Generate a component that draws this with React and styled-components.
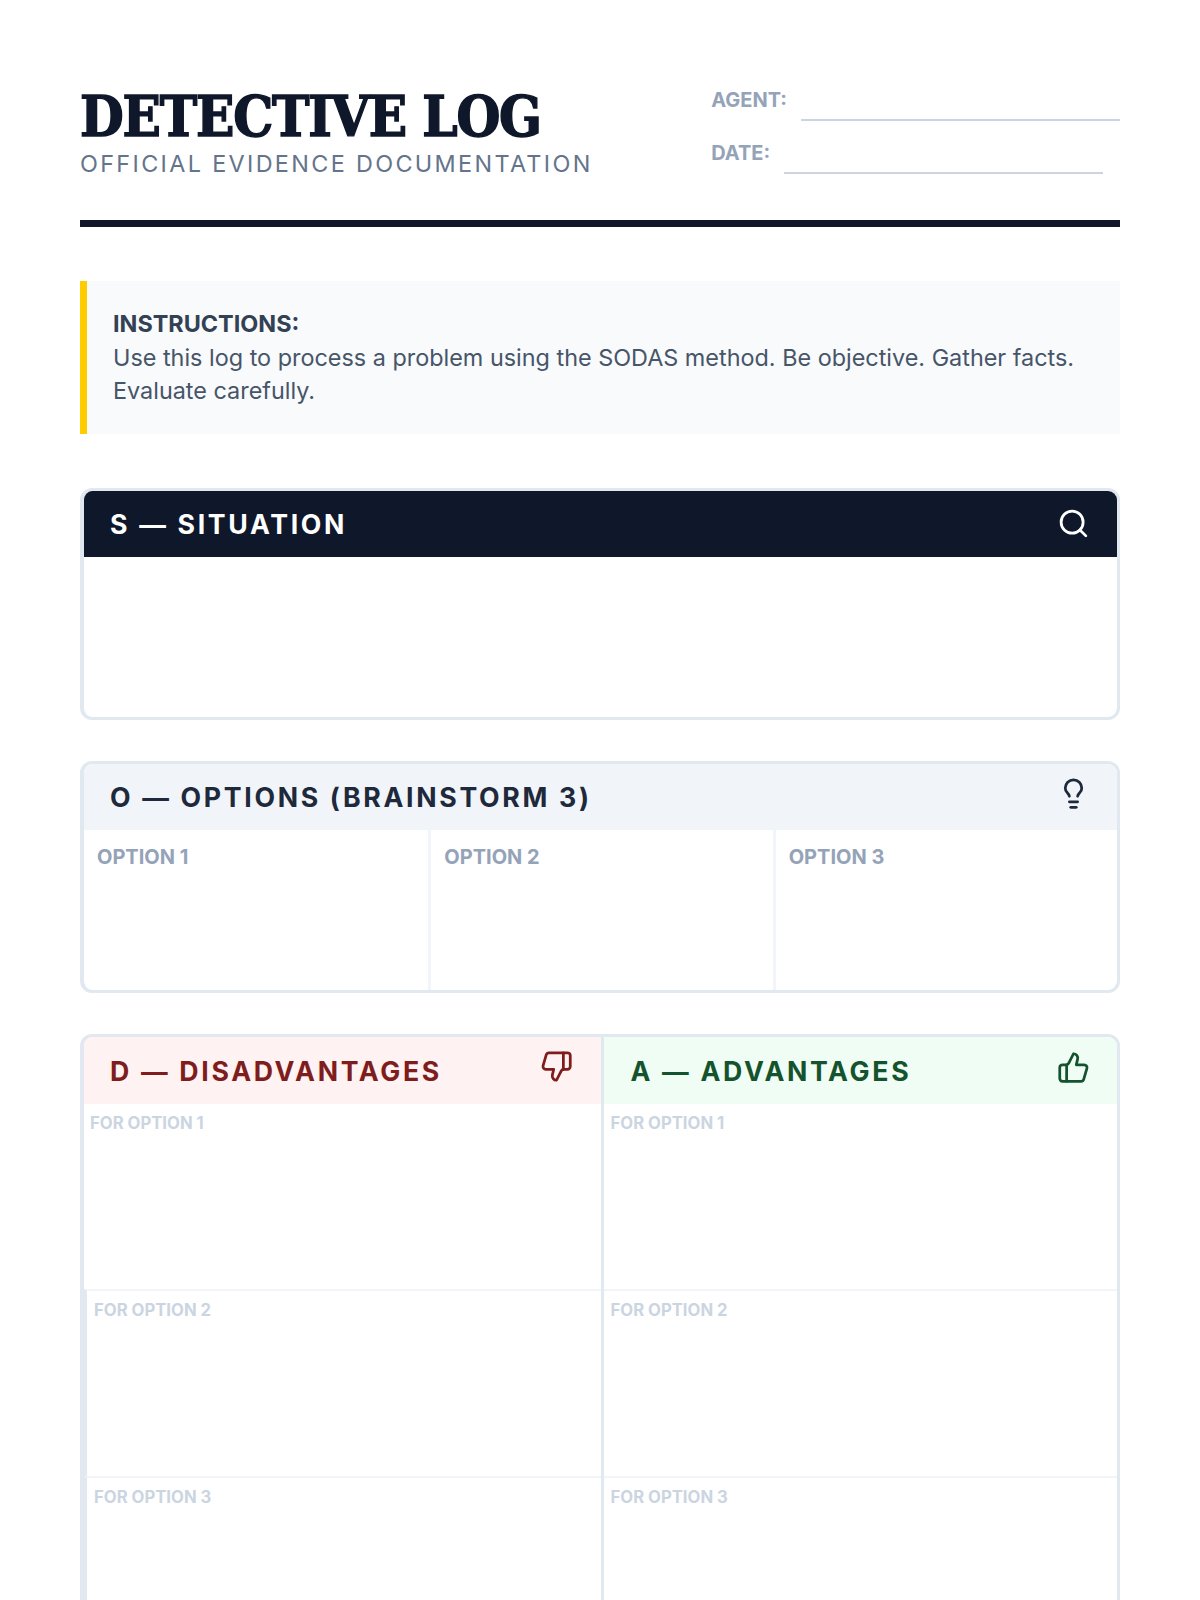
import React from 'react';
import styled, { createGlobalStyle } from 'styled-components';
import { Search, Lightbulb, ThumbsDown, ThumbsUp } from 'lucide-react';

const Global = createGlobalStyle`
  html, body { margin: 0; padding: 0; background: #fff; }
  body { font-family: Inter, "Liberation Sans", sans-serif; }
  * { box-sizing: border-box; }
`;
const Page = styled.div`
  width: 1200px;
  padding: 80px;
  display: flex;
  flex-direction: column;
`;
const Header = styled.header`
  display: flex;
  justify-content: space-between;
  align-items: flex-start;
  height: 147px;
  border-bottom: 7px solid #0f172a;
  margin-bottom: 54px;
`;
const Title = styled.h1`
  margin: 6px 0 3px;
  font-family: "DejaVu Serif Condensed", "DejaVu Serif", serif;
  font-stretch: condensed;
  font-weight: 700;
  font-size: 56px;
  line-height: 60px;
  letter-spacing: -1.2px;
  color: #0f172a;
  -webkit-text-stroke: 1.4px #0f172a;
`;
const Subtitle = styled.div`
  font-size: 23.4px;
  line-height: 30px;
  letter-spacing: 2.34px;
  color: #64748b;
  font-weight: 400;
`;
const Meta = styled.div`
  display: flex;
  flex-direction: column;
  gap: 20px;
  padding-top: 8px;
`;
const MetaRow = styled.div`
  display: flex;
  gap: 14px;
`;
const MetaLabel = styled.span`
  font-size: 20px;
  line-height: 24px;
  font-weight: 700;
  color: #94a3b8;
`;
const MetaLine = styled.span`
  width: 319px;
  height: 33px;
  border-bottom: 2px solid #cbd5e1;
`;
const Instructions = styled.section`
  background: #f8fafc;
  border-left: 7px solid #ffcc00;
  padding: 26px 26px;
  font-size: 23.4px;
  line-height: 33.6px;
  color: #475569;
  margin-bottom: 54px;
`;
const Strong = styled.strong`
  display: block;
  color: #334155;
  font-weight: 700;
`;
const Card = styled.section`
  border: 3px solid #e2e8f0;
  border-left-width: 4px;
  border-radius: 12px;
  overflow: hidden;
  margin-bottom: 41px;
`;
const SectionHead = styled.div`
  height: ${p => p.$h || 66}px;
  padding: ${p => (p.$h ? '1px' : '0')} 27.5px 0 ${p => p.$left || 26}px;
  display: flex;
  align-items: center;
  justify-content: space-between;
  background: ${p => p.$bg};
  color: ${p => p.$fg};
`;
const SectionTitle = styled.h2`
  margin: 0;
  font-size: 26.7px;
  font-weight: 700;
  letter-spacing: 2.67px;
`;
const IconWrap = styled.span`
  display: flex;
  transform: translateY(${p => p.$lift || 0}px);
`;
const Blank = styled.div`
  height: 160px;
`;
const Cols = styled.div`
  display: grid;
  grid-template-columns: repeat(3, 1fr);
  height: 160px;
`;
const OptionCell = styled.div`
  padding: 13px;
  font-size: 20px;
  line-height: 28px;
  font-weight: 700;
  color: #94a3b8;
  border-left: ${p => (p.$first ? 'none' : '3px solid #f1f5f9')};
`;
const Split = styled.div`
  display: grid;
  grid-template-columns: 1fr 1fr;
`;
const Side = styled.div`
  border-left: ${p => (p.$right ? '3px solid #e2e8f0' : 'none')};
`;
const ForRow = styled.div`
  height: ${p => (p.$first ? 185.5 : 186.5)}px;
  padding: 6px ${p => (p.$right || p.$bar ? '7px' : '6px')};
  font-size: 16.7px;
  line-height: 26px;
  font-weight: 700;
  color: #cbd5e1;
  border-top: ${p => (p.$first ? 'none' : '2px solid #f1f5f9')};
  border-left: ${p => (p.$bar ? '3px solid #e2e8f0' : 'none')};
`;

const rows = (bar) => [1, 2, 3].map(n => (
  <ForRow key={n} $first={n === 1} $right={!bar} $bar={bar && n > 1}>FOR OPTION {n}</ForRow>
));

export default function App() {
  return (
    <Page>
      <Global />
      <Header>
        <div>
          <Title>DETECTIVE LOG</Title>
          <Subtitle>OFFICIAL EVIDENCE DOCUMENTATION</Subtitle>
        </div>
        <Meta>
          <MetaRow><MetaLabel>AGENT:</MetaLabel><MetaLine /></MetaRow>
          <MetaRow><MetaLabel>DATE:</MetaLabel><MetaLine /></MetaRow>
        </Meta>
      </Header>
      <Instructions>
        <Strong>INSTRUCTIONS:</Strong>
        Use this log to process a problem using the SODAS method. Be objective. Gather facts. Evaluate carefully.
      </Instructions>
      <Card>
        <SectionHead $bg="#0f172a" $fg="#fff">
          <SectionTitle>S — SITUATION</SectionTitle>
          <IconWrap><Search size={33} /></IconWrap>
        </SectionHead>
        <Blank />
      </Card>
      <Card>
        <SectionHead $bg="#f1f5f9" $fg="#1e293b">
          <SectionTitle>O — OPTIONS (BRAINSTORM 3)</SectionTitle>
          <IconWrap $lift={-3}><Lightbulb size={33} /></IconWrap>
        </SectionHead>
        <Cols>
          <OptionCell $first>OPTION 1</OptionCell>
          <OptionCell>OPTION 2</OptionCell>
          <OptionCell>OPTION 3</OptionCell>
        </Cols>
      </Card>
      <Card>
        <Split>
          <Side>
            <SectionHead $h={67} $bg="#fef2f2" $fg="#7f1d1d">
              <SectionTitle>D — DISADVANTAGES</SectionTitle>
              <IconWrap $lift={-4}><ThumbsDown size={33} /></IconWrap>
            </SectionHead>
            {rows(true)}
          </Side>
          <Side $right>
            <SectionHead $h={67} $left={27} $bg="#f0fdf4" $fg="#14532d">
              <SectionTitle>A — ADVANTAGES</SectionTitle>
              <IconWrap $lift={-3}><ThumbsUp size={33} /></IconWrap>
            </SectionHead>
            {rows(false)}
          </Side>
        </Split>
      </Card>
    </Page>
  );
}
